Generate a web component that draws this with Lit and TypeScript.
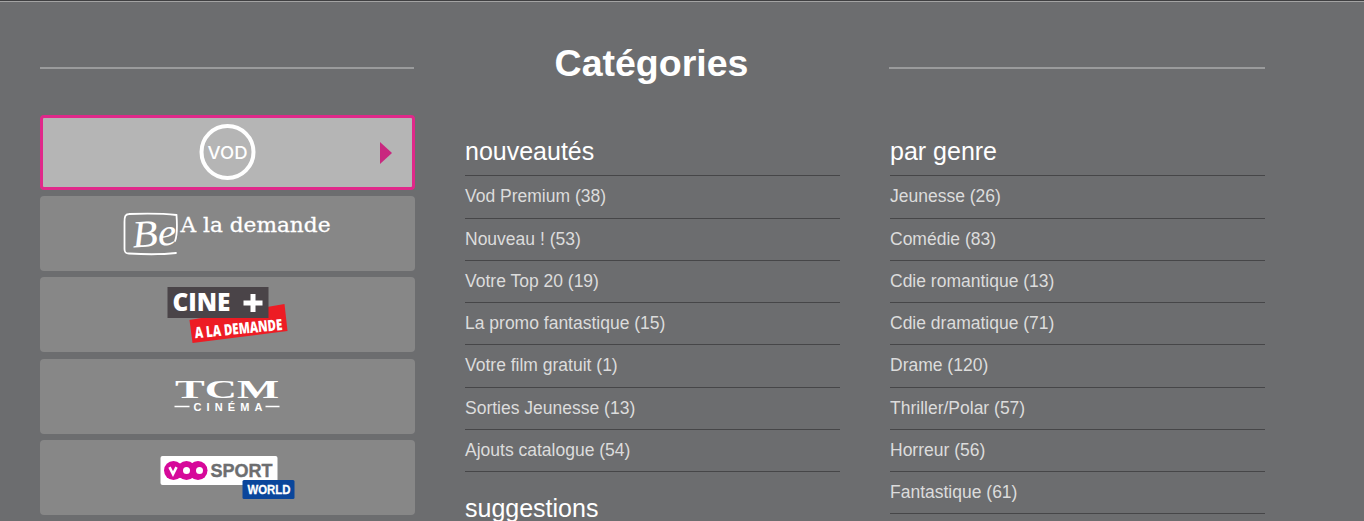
import { LitElement, html, css, svg } from "lit";
import { customElement } from "lit/decorators.js";

const nouveautes = [
  "Vod Premium (38)",
  "Nouveau ! (53)",
  "Votre Top 20 (19)",
  "La promo fantastique (15)",
  "Votre film gratuit (1)",
  "Sorties Jeunesse (13)",
  "Ajouts catalogue (54)",
];

const genres = [
  "Jeunesse (26)",
  "Comédie (83)",
  "Cdie romantique (13)",
  "Cdie dramatique (71)",
  "Drame (120)",
  "Thriller/Polar (57)",
  "Horreur (56)",
  "Fantastique (61)",
];

// logos des chaines, dessinés en svg
const vodLogo = svg`
  <svg width="58" height="58" viewBox="0 0 58 58">
    <circle cx="28.500" cy="29" r="26" fill="none" stroke="#fff" stroke-width="4"/>
    <text x="28.500" y="35.500" text-anchor="middle" font-family="Inter, 'Liberation Sans', sans-serif" font-size="17.500" font-weight="500" fill="#fff" textLength="40" lengthAdjust="spacingAndGlyphs">VOD</text>
  </svg>`;

const beLogo = svg`
  <svg width="210" height="44" viewBox="0 0 210 44">
    <path d="M52 29 C54 24 54 10 53.500 3 C40 1.500 20 1.500 6 2 C2 2 1.500 5 1.500 10 L1.500 37 C1.500 41 3 41.500 6 41.500 C22 42.500 40 42.500 53 41" fill="none" stroke="#fff" stroke-width="1.800" stroke-linecap="round"/>
    <text x="9" y="34" font-family="'Liberation Serif', serif" font-style="italic" font-size="38" fill="#fff" textLength="44" lengthAdjust="spacingAndGlyphs" transform="rotate(-4 30 20)">Be</text>
    <text x="57.500" y="19.500" font-family="'DejaVu Serif', serif" font-size="20" fill="#fff" stroke="#fff" stroke-width=".3" textLength="150" lengthAdjust="spacingAndGlyphs">A la demande</text>
  </svg>`;

const cineLogo = svg`
  <svg width="124" height="62" viewBox="0 0 124 62">
    <polygon points="23.500,36 118.500,20 121.500,47 26.500,59" fill="#ed1c24"/>
    <rect x="1.500" y="3" width="101" height="31" fill="#4a4448"/>
    <text x="73" y="50" text-anchor="middle" transform="rotate(-5.500 73 50)" font-family="'Open Sans', 'Liberation Sans', sans-serif" font-size="15.500" font-weight="800" fill="#fff" textLength="88" lengthAdjust="spacingAndGlyphs">A LA DEMANDE</text>
    <text x="6.500" y="27" font-family="'Open Sans', 'Liberation Sans', sans-serif" font-size="25" font-weight="800" fill="#fff" textLength="58" lengthAdjust="spacingAndGlyphs">CINE</text>
    <path d="M77.500 19 H96.500 M87 10 V28" stroke="#fff" stroke-width="5"/>
  </svg>`;

const tcmLogo = svg`
  <svg width="108" height="40" viewBox="0 0 108 40">
    <text x="53" y="21.600" text-anchor="middle" font-family="'Liberation Serif', serif" font-size="25" font-weight="700" fill="#fff" textLength="104" lengthAdjust="spacingAndGlyphs">TCM</text>
    <path d="M.500 30.600 H15.500 M91.500 30.600 H105.500" stroke="#fff" stroke-width="1.500"/>
    <text x="54" y="34.600" text-anchor="middle" font-family="'Liberation Sans', sans-serif" font-size="11" font-weight="700" fill="#fff" textLength="69">CINÉMA</text>
  </svg>`;

const vooLogo = svg`
  <svg width="136" height="46" viewBox="0 0 136 46">
    <g transform="translate(0 .7)">
      <rect x=".500" y="1.300" width="117" height="29" rx="2" fill="#fff"/>
      <circle cx="13.500" cy="15.800" r="9.500" fill="#d6099a"/>
      <circle cx="26.500" cy="15.800" r="9.500" fill="#d6099a"/>
      <circle cx="38" cy="15.800" r="9.500" fill="#d6099a"/>
      <circle cx="26.500" cy="15.800" r="3.500" fill="#fff"/>
      <circle cx="39.500" cy="15.800" r="3.500" fill="#fff"/>
      <path d="M9.500 12.500 L13 19.500 L16.500 12.500" fill="none" stroke="#fff" stroke-width="2.600"/>
      <text x="50.500" y="22.300" font-family="'Liberation Sans', sans-serif" font-size="19" font-weight="700" fill="#6d6e70" stroke="#6d6e70" stroke-width=".4" textLength="62" lengthAdjust="spacingAndGlyphs">SPORT</text>
      <rect x="82.500" y="25.300" width="52" height="19" rx="1.500" fill="#0a469b"/>
      <text x="87.500" y="39.300" font-family="'Liberation Sans', sans-serif" font-size="13" font-weight="700" fill="#fff" stroke="#fff" stroke-width=".3" textLength="43" lengthAdjust="spacingAndGlyphs">WORLD</text>
    </g>
  </svg>`;

@customElement("app-root")
export class AppRoot extends LitElement {
  static styles = css`
    :host {
      display: block;
      height: 521px;
      overflow: hidden;
      background: #6c6d6f;
      font-family: "Liberation Sans", Arial, sans-serif;
      color: #fff;
    }

    .top-line {
      height: 1px;
      background: #3f3f41;
      border-bottom: 1px solid #a3a3a3;
    }

    .page {
      width: 1225px;
      margin-left: 40px;
    }

    .header {
      display: flex;
      align-items: flex-start;
      height: 112.800px;
    }

    .header h1 {
      flex: 1;
      margin: 40px 0 0;
      text-align: center;
      font-size: 37.500px;
      line-height: 42px;
      font-weight: 700;
    }

    .rule {
      height: 2px;
      background: #9a9b9c;
      margin-top: 65px;
    }

    .rule.left {
      width: 374px;
    }

    .rule.right {
      width: 376px;
    }

    .columns {
      display: grid;
      grid-template-columns: repeat(3, 375px);
      column-gap: 50px;
    }

    .tile {
      box-sizing: border-box;
      height: 75px;
      margin-bottom: 6.300px;
      background: #878787;
      border-radius: 4px;
      display: flex;
      align-items: center;
      justify-content: center;
      position: relative;
    }

    .tile.active {
      background: #b5b5b5;
      border: 3px solid #e0288a;
    }

    .tile.active::after {
      content: "";
      position: absolute;
      right: 20px;
      top: 24px;
      border-left: 12px solid #c9287f;
      border-top: 11px solid transparent;
      border-bottom: 11px solid transparent;
    }

    .tile svg {
      display: block;
      overflow: visible;
    }

    h2 {
      margin: 0;
      height: 61.500px;
      box-sizing: border-box;
      padding-top: 22px;
      font-size: 25px;
      line-height: 28px;
      font-weight: 400;
      border-bottom: 1px solid #464648;
    }

    .list {
      list-style: none;
      margin: 0;
      padding: 0;
    }

    .list li {
      box-sizing: border-box;
      height: 42.250px;
      line-height: 41.500px;
      font-size: 17.500px;
      color: #dcdcdc;
      border-bottom: 1px solid #464648;
    }

    .group-title {
      border-bottom: none;
      height: auto;
      padding-top: 22px;
    }
  `;

  render() {
    return html`
      <div class="top-line"></div>
      <div class="page">
        <div class="header">
          <div class="rule left"></div>
          <h1>Catégories</h1>
          <div class="rule right"></div>
        </div>
        <div class="columns">
          <div>
            <div class="tile active">${vodLogo}</div>
            <div class="tile">${beLogo}</div>
            <div class="tile">${cineLogo}</div>
            <div class="tile">${tcmLogo}</div>
            <div class="tile">${vooLogo}</div>
          </div>
          <div>
            <h2>nouveautés</h2>
            <ul class="list">${nouveautes.map((n) => html`<li>${n}</li>`)}</ul>
            <h2 class="group-title">suggestions</h2>
          </div>
          <div>
            <h2>par genre</h2>
            <ul class="list">${genres.map((n) => html`<li>${n}</li>`)}</ul>
          </div>
        </div>
      </div>
    `;
  }
}
